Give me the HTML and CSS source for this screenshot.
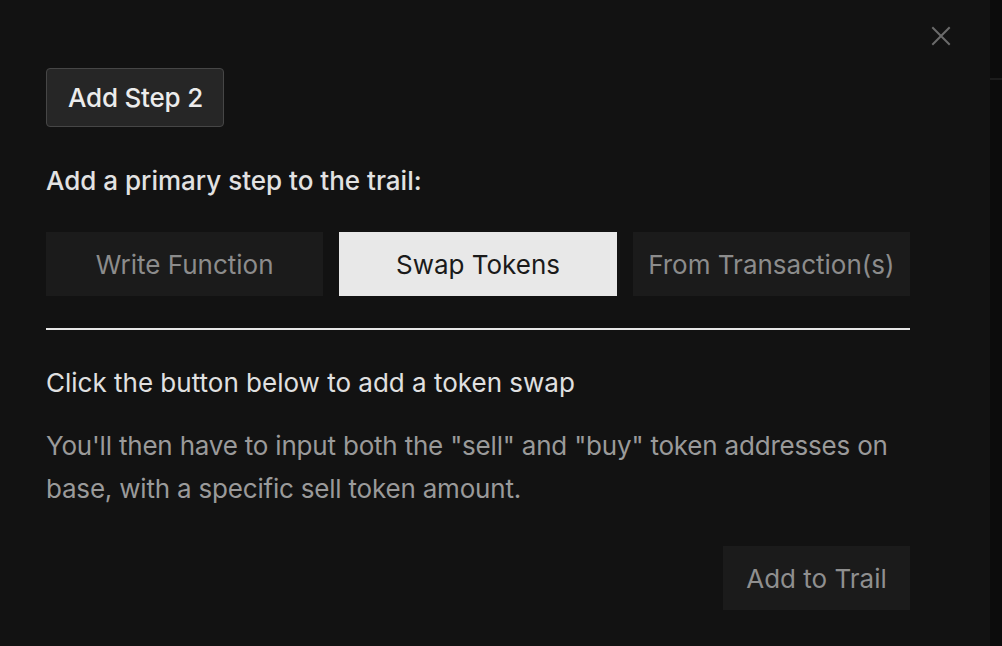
FILE: index.html
```html
<!DOCTYPE html>
<html lang="en">
<head>
<meta charset="utf-8">
<title>Add Step 2</title>
<link rel="stylesheet" href="styles.css">
</head>
<body>
<div class="page">
  <main class="panel">
    <button class="close" aria-label="Close">
      <svg width="20" height="20" viewBox="0 0 20 20" fill="none" stroke="currentColor" stroke-width="2" stroke-linecap="square">
        <path d="M2 2 L18 18 M18 2 L2 18"/>
      </svg>
    </button>
    <div class="step-badge">Add Step 2</div>
    <h2 class="heading">Add a primary step to the trail:</h2>
    <div class="tabs">
      <button class="tab">Write Function</button>
      <button class="tab active">Swap Tokens</button>
      <button class="tab">From Transaction(s)</button>
    </div>
    <hr class="divider">
    <h3 class="subheading">Click the button below to add a token swap</h3>
    <p class="desc">You'll then have to input both the "sell" and "buy" token addresses on base, with a specific sell token amount.</p>
    <div class="actions">
      <button class="add-btn">Add to Trail</button>
    </div>
  </main>
  <aside class="strip"><div class="strip-line"></div></aside>
</div>
</body>
</html>
```
FILE: styles.css
```css
* { box-sizing: border-box; }
html, body {
  margin: 0;
  height: 100%;
  background: #111111;
  font-family: Inter, "Noto Sans", "Liberation Sans", sans-serif;
}
.page {
  display: flex;
  height: 646px;
  overflow: hidden;
}
.panel {
  position: relative;
  flex: 1;
  padding: 68px 80px 0 46px;
  background: #121212;
  display: flex;
  flex-direction: column;
}
.strip {
  width: 12px;
  background: #0c0c0c;
  padding-top: 78px;
}
.strip-line {
  height: 2px;
  background: #1c1c1c;
}
.close {
  position: absolute;
  top: 26px;
  left: 931px;
  width: 20px;
  height: 20px;
  padding: 0;
  border: 0;
  background: none;
  color: #6b6b6b;
  display: flex;
}
.step-badge {
  align-self: flex-start;
  height: 59px;
  padding: 0 20px 0 21px;
  display: flex;
  align-items: center;
  border: 1px solid #464646;
  border-radius: 4px;
  background: #262626;
  color: #ececec;
  font-size: 26px;
  font-weight: 500;
  letter-spacing: -0.2px;
}
.heading {
  margin: 32px 0 0;
  font-size: 26px;
  line-height: 43px;
  font-weight: 500;
  color: #e2e2e2;
}
.tabs {
  margin-top: 30px;
  display: grid;
  grid-template-columns: repeat(3, 1fr);
  gap: 16px;
}
.tab {
  height: 64px;
  border: 0;
  border-radius: 0;
  background: #1b1b1b;
  color: #8c8c8c;
  font-family: inherit;
  font-size: 26px;
  font-weight: 400;
  padding: 0;
}
.tab.active {
  background: #e8e8e8;
  color: #1a1a1a;
}
.divider {
  margin: 32px 0 0;
  border: 0;
  height: 2px;
  background: #e6e6e6;
}
.subheading {
  margin: 31px 0 0;
  font-size: 26px;
  line-height: 43px;
  font-weight: 400;
  color: #e0e0e0;
}
.desc {
  margin: 20px 0 0;
  font-size: 26px;
  line-height: 43px;
  color: #9a9a9a;
  letter-spacing: -0.2px;
}
.actions {
  margin-top: 36px;
  display: flex;
  justify-content: flex-end;
}
.add-btn {
  width: 187px;
  height: 64px;
  border: 0;
  background: #1b1b1b;
  color: #8f8f8f;
  font-family: inherit;
  font-size: 26px;
  padding: 0;
}
```
